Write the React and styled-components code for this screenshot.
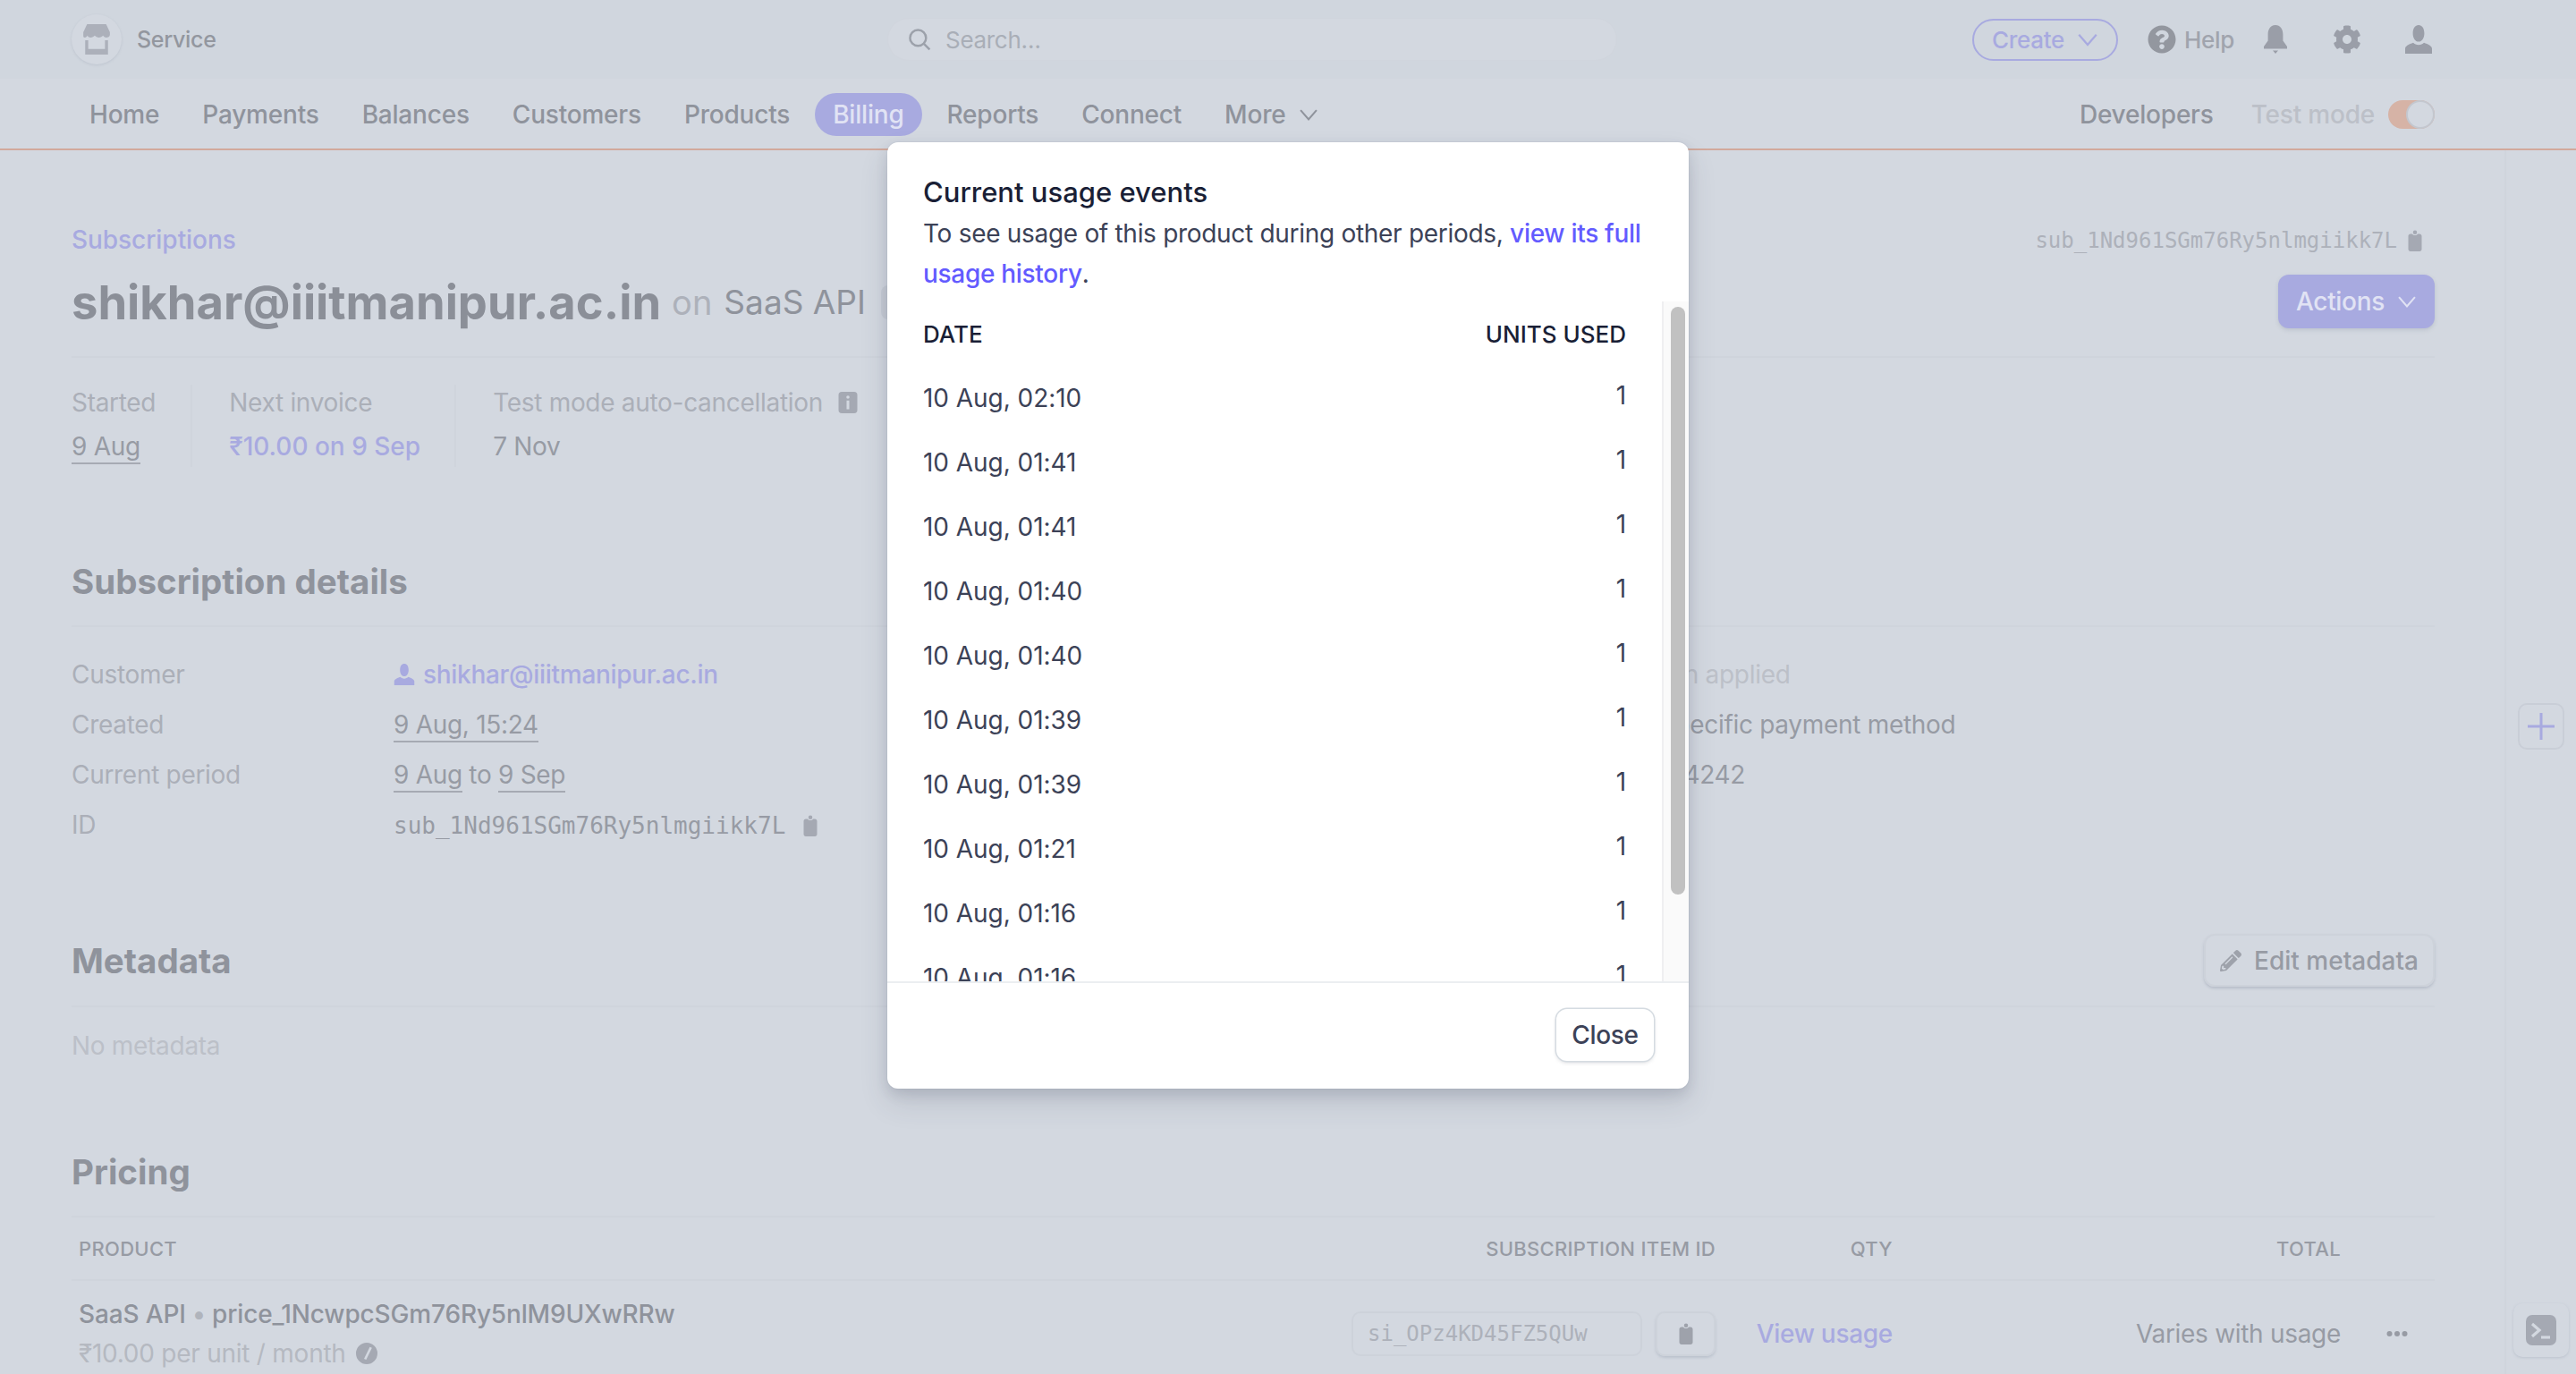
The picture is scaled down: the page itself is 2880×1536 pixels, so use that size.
import styled, { createGlobalStyle } from 'styled-components';
import { FaCog, FaPencilAlt, FaQuestionCircle } from 'react-icons/fa';

const usageEvents = [
  '10 Aug, 02:10',
  '10 Aug, 01:41',
  '10 Aug, 01:41',
  '10 Aug, 01:40',
  '10 Aug, 01:40',
  '10 Aug, 01:39',
  '10 Aug, 01:39',
  '10 Aug, 01:21',
  '10 Aug, 01:16',
  '10 Aug, 01:16',
];

const navLinks = ['Home', 'Payments', 'Balances', 'Customers', 'Products', 'Billing', 'Reports', 'Connect'];

const Chevron = ({ size = 22 }) => (
  <svg width={size} height={size} viewBox="0 0 16 16" fill="none" stroke="currentColor" strokeWidth="1.5">
    <path d="M1.500 4.500 8 12l6.500-7.500" />
  </svg>
);

const Clipboard = ({ size = 24 }) => (
  <svg width={size} height={size} viewBox="0 0 16 16" fill="currentColor">
    <circle cx="8" cy="1.800" r="1.500" />
    <path d="M4.600 3H6c.4.7 1.100 1 2 1s1.600-.3 2-1h1.400c.9 0 1.600.7 1.600 1.600V14.400c0 .9-.7 1.600-1.600 1.600H4.600C3.700 16 3 15.300 3 14.400V4.600C3 3.700 3.700 3 4.600 3z" />
  </svg>
);

const UserIcon = ({ size = 32 }) => (
  <svg width={size} height={size} viewBox="0 0 16 16" fill="currentColor">
    <path d="M8 9.300c1.900 0 3.200-2 3.200-4.700C11.200 1.800 9.900 0 8 0S4.800 1.800 4.800 4.600c0 2.700 1.300 4.700 3.200 4.700z" />
    <path d="M.5 13.200c0-1.400 2.200-2.500 4.500-3.300.7.800 1.800 1.200 3 1.200s2.300-.4 3-1.200c2.300.8 4.500 1.900 4.500 3.300V16H.5z" />
  </svg>
);

const StoreIcon = () => (
  <svg width="34" height="34" viewBox="0 0 16 16" fill="currentColor">
    <path d="M3 0h10l2 4.200v1.300c0 1-1 1.500-1.900 1.500-.8 0-1.400-.4-1.700-1-.4.600-1.300 1-2.200 1-.8 0-1.700-.4-2.200-1-.4.600-1.300 1-2.200 1-.8 0-1.400-.4-1.700-1C3 6.600 2.400 7 1.800 7 1 7 1 6.500 1 5.500V4.200z" />
    <path d="M2 8.500h1.600V13h8.800V8.500H14V16H2z" />
  </svg>
);

const BellIcon = () => (
  <svg width="32" height="32" viewBox="0 0 16 16" fill="currentColor">
    <path d="M8 0c2.600 0 4.200 2.300 4.200 5.200v3.600L14.500 12v1.200h-13V12l2.300-3.200V5.200C3.800 2.300 5.400 0 8 0z" />
    <path d="M6.500 14.300h3L8 16z" />
  </svg>
);

const InfoIcon = () => (
  <svg width="24" height="24" viewBox="0 0 16 16" fill="currentColor">
    <path fillRule="evenodd" d="M3.500 0h9A2.500 2.500 0 0 1 15 2.500v11a2.500 2.500 0 0 1-2.500 2.500h-9A2.500 2.500 0 0 1 1 13.500v-11A2.500 2.500 0 0 1 3.500 0zM7 6.500V13h2V6.500zM8 2.800a1.200 1.200 0 1 0 0 2.400 1.200 1.200 0 0 0 0-2.400z" />
  </svg>
);

const PriceIcon = () => (
  <svg width="24" height="24" viewBox="0 0 16 16" fill="currentColor">
    <path fillRule="evenodd" d="M8 0a8 8 0 1 1 0 16A8 8 0 0 1 8 0zm2.300 3.200L6 12l1.600.7 4.300-8.800z" />
  </svg>
);

const TerminalIcon = () => (
  <svg width="34" height="34" viewBox="0 0 17 17">
    <rect width="17" height="17" rx="3.500" fill="#a5a9b3" />
    <path d="M3.500 5 7.500 8.500 3.500 12" fill="none" stroke="#d3d8e0" strokeWidth="1.600" />
    <path d="M8.500 12.500h5" fill="none" stroke="#d3d8e0" strokeWidth="1.600" />
  </svg>
);

export default function App() {
  return (
    <>
      <GlobalStyle />
      <Page>
        <TopBar>
          <Account>
            <StoreBadge><StoreIcon /></StoreBadge>
            Service
          </Account>
          <SearchBox>
            <svg width="26" height="26" viewBox="0 0 16 16" fill="none" stroke="currentColor" strokeWidth="1.500">
              <circle cx="7" cy="7" r="5.500" />
              <path d="m11 11 4 4" />
            </svg>
            <SearchText>Search…</SearchText>
          </SearchBox>
          <TopActions>
            <CreateButton>Create <Chevron size={24} /></CreateButton>
            <HelpLink><FaQuestionCircle size={32} /> Help</HelpLink>
            <TopIcon $left={30}><BellIcon /></TopIcon>
            <TopIcon $left={48}><FaCog size={32} /></TopIcon>
            <TopIcon $left={48}><UserIcon /></TopIcon>
          </TopActions>
        </TopBar>

        <NavBar>
          <NavLinks>
            {navLinks.map((link) => (
              <NavItem key={link} $active={link === 'Billing'}>{link}</NavItem>
            ))}
            <NavItem>More <Chevron /></NavItem>
          </NavLinks>
          <NavRight>
            <Developers>Developers</Developers>
            <TestLabel>Test mode</TestLabel>
            <Toggle><ToggleThumb /></Toggle>
          </NavRight>
        </NavBar>

        <Body>
          <Content>
            <TopLine>
              <Breadcrumb>Subscriptions</Breadcrumb>
              <IdRow>sub_1Nd961SGm76Ry5nlmgiikk7L <Clipboard /></IdRow>
            </TopLine>

            <TitleRow>
              <TitleText>
                <Email>shikhar@iiitmanipur.ac.in</Email>
                <On>on</On>
                <Product>SaaS API</Product>
                <Badge />
              </TitleText>
              <ActionsButton>Actions <Chevron /></ActionsButton>
            </TitleRow>

            <Stats>
              <Stat>
                <StatLabel>Started</StatLabel>
                <StatValue><Dotted>9 Aug</Dotted></StatValue>
              </Stat>
              <Stat>
                <StatLabel>Next invoice</StatLabel>
                <StatValue $link>₹10.00 on 9 Sep</StatValue>
              </Stat>
              <Stat>
                <StatLabel>Test mode auto-cancellation <InfoIcon /></StatLabel>
                <StatValue>7 Nov</StatValue>
              </Stat>
            </Stats>

            <SectionHead $top={100}>
              <SectionTitle>Subscription details</SectionTitle>
            </SectionHead>
            <Details>
              <DetailColumn>
                <DetailRow>
                  <DetailLabel>Customer</DetailLabel>
                  <CustomerLink><UserIcon size={24} /> shikhar@iiitmanipur.ac.in</CustomerLink>
                </DetailRow>
                <DetailRow>
                  <DetailLabel>Created</DetailLabel>
                  <DetailValue><Dotted>9 Aug, 15:24</Dotted></DetailValue>
                </DetailRow>
                <DetailRow>
                  <DetailLabel>Current period</DetailLabel>
                  <DetailValue><Dotted>9 Aug</Dotted> to <Dotted>9 Sep</Dotted></DetailValue>
                </DetailRow>
                <DetailRow>
                  <DetailLabel>ID</DetailLabel>
                  <MonoValue>sub_1Nd961SGm76Ry5nlmgiikk7L <Clipboard /></MonoValue>
                </DetailRow>
              </DetailColumn>
              <DetailColumn>
                <SideValue $faint>Option applied</SideValue>
                <SideValue>No specific payment method</SideValue>
                <SideValue>•••• 4242</SideValue>
              </DetailColumn>
            </Details>

            <SectionHead $top={94}>
              <SectionTitle>Metadata</SectionTitle>
              <EditButton><FaPencilAlt size={24} /> Edit metadata</EditButton>
            </SectionHead>
            <EmptyNote>No metadata</EmptyNote>

            <SectionHead $top={93}>
              <SectionTitle>Pricing</SectionTitle>
            </SectionHead>
            <PriceHeader>
              <span>Product</span>
              <RightCell>Subscription item ID</RightCell>
              <RightCell>Qty</RightCell>
              <RightCell>Total</RightCell>
            </PriceHeader>
            <PriceRow>
              <div>
                <PriceName>SaaS API <Dot>•</Dot> price_1NcwpcSGm76Ry5nlM9UXwRRw</PriceName>
                <PriceSub>₹10.00 per unit / month <PriceIcon /></PriceSub>
              </div>
              <ItemIdCell>
                <ItemIdField>si_OPz4KD45FZ5QUw</ItemIdField>
                <CopyButton><Clipboard /></CopyButton>
              </ItemIdCell>
              <UsageLink>View usage</UsageLink>
              <RightCell>Varies with usage</RightCell>
              <MoreDots>
                <svg width="24" height="8" viewBox="0 0 24 8" fill="currentColor">
                  <circle cx="3.500" cy="4" r="3" />
                  <circle cx="12" cy="4" r="3" />
                  <circle cx="20.500" cy="4" r="3" />
                </svg>
              </MoreDots>
            </PriceRow>
          </Content>

          <Rail>
            <PlusButton>
              <svg width="32" height="32" viewBox="0 0 32 32" fill="none" stroke="currentColor" strokeWidth="3">
                <path d="M16 1v30M1 16h30" />
              </svg>
            </PlusButton>
            <TerminalButton><TerminalIcon /></TerminalButton>
          </Rail>
        </Body>

        <Overlay>
          <Modal>
            <ModalHead>
              <ModalTitle>Current usage events</ModalTitle>
              <ModalText>
                To see usage of this product during other periods, <ModalLink>view its full usage history</ModalLink>.
              </ModalText>
            </ModalHead>
            <ScrollArea>
              <EventList>
                <EventHeader>
                  <span>DATE</span>
                  <span>UNITS USED</span>
                </EventHeader>
                {usageEvents.map((date, i) => (
                  <EventRow key={i}>
                    <span>{date}</span>
                    <EventUnits>1</EventUnits>
                  </EventRow>
                ))}
              </EventList>
              <ScrollTrack><ScrollThumb /></ScrollTrack>
            </ScrollArea>
            <ModalFooter>
              <CloseButton>Close</CloseButton>
            </ModalFooter>
          </Modal>
        </Overlay>
      </Page>
    </>
  );
}

const GlobalStyle = createGlobalStyle`
  html, body {
    margin: 0;
    padding: 0;
    background: #d3d8e0;
  }
  * {
    box-sizing: border-box;
  }
  body {
    font-family: Inter, "Liberation Sans", sans-serif;
    font-size: 28px;
    letter-spacing: -.3px;
    color: #8f939c;
  }
`;
const Page = styled.div`
  position: relative;
  width: 2880px;
  height: 1536px;
  overflow: hidden;
  background: #d3d8e0;
`;
const TopBar = styled.header`
  height: 88px;
  padding: 0 160px 0 80px;
  display: grid;
  grid-template-columns: 912px 816px 1fr;
  align-items: center;
  background: #d0d6de;
`;
const Account = styled.div`
  display: flex;
  align-items: center;
  gap: 17px;
  font-size: 25px;
  font-weight: 500;
  color: #93979f;
`;
const StoreBadge = styled.div`
  width: 56px;
  height: 56px;
  border-radius: 50%;
  display: flex;
  align-items: center;
  justify-content: center;
  background: #d3d8e0;
  box-shadow: 0 1px 3px rgba(120, 130, 150, .2);
  color: #acb0ba;
`;
const SearchBox = styled.div`
  height: 48px;
  padding: 0 22px;
  display: flex;
  align-items: center;
  gap: 16px;
  border-radius: 24px;
  border: 1px solid #d0d5dd;
  background: #d3d8e0;
  color: #9ca1aa;
`;
const SearchText = styled.span`
  font-size: 26px;
  color: #a9aeb7;
`;
const TopActions = styled.div`
  display: flex;
  align-items: center;
  justify-content: flex-end;
`;
const CreateButton = styled.div`
  width: 163px;
  height: 47px;
  display: flex;
  align-items: center;
  justify-content: center;
  gap: 14px;
  border: 2px solid #a8aae0;
  border-radius: 24px;
  font-size: 26px;
  font-weight: 500;
  color: #a8aae0;
`;
const HelpLink = styled.div`
  margin-left: 33px;
  display: flex;
  align-items: center;
  gap: 9px;
  font-size: 26px;
  font-weight: 500;
  color: #a0a4ad;
  svg {
    color: #93979f;
  }
`;
const TopIcon = styled.div`
  margin-left: ${({ $left }) => $left}px;
  display: flex;
  color: #9a9ea8;
`;
const NavBar = styled.nav`
  height: 80px;
  padding: 2px 158px 0 80px;
  display: flex;
  align-items: center;
  justify-content: space-between;
  border-bottom: 2px solid #d2a99c;
  letter-spacing: -.2px;
`;
const NavLinks = styled.div`
  display: flex;
  gap: 8px;
`;
const NavItem = styled.div`
  height: 48px;
  padding: 0 20px;
  display: flex;
  align-items: center;
  gap: 14px;
  border-radius: 24px;
  font-weight: 500;
  color: ${({ $active }) => ($active ? '#e1e3f4' : '#8f939c')};
  background: ${({ $active }) => ($active ? '#a8aae0' : 'transparent')};
`;
const NavRight = styled.div`
  display: flex;
  align-items: center;
`;
const Developers = styled.span`
  font-weight: 500;
  color: #8f939c;
`;
const TestLabel = styled.span`
  margin-left: 42px;
  font-weight: 500;
  color: #bcc0c8;
`;
const Toggle = styled.div`
  width: 52px;
  height: 32px;
  margin-left: 15px;
  border-radius: 16px;
  background: #d6b3a6;
  display: flex;
  justify-content: flex-end;
`;
const ToggleThumb = styled.div`
  width: 32px;
  height: 32px;
  border-radius: 50%;
  background: #d3d8e0;
  border: 2px solid #c3c7cf;
`;
const Body = styled.div`
  height: 1368px;
  display: flex;
`;
const Content = styled.main`
  flex: 1;
  min-width: 0;
  padding: 80px 78px 0 80px;
`;
const TopLine = styled.div`
  height: 40px;
  display: flex;
  align-items: center;
  justify-content: space-between;
`;
const Breadcrumb = styled.span`
  font-weight: 500;
  letter-spacing: -.05px;
  color: #a8aae0;
`;
const IdRow = styled.span`
  display: flex;
  align-items: center;
  gap: 8px;
  padding: 2px 10px 0 0;
  font-family: "DejaVu Sans Mono", monospace;
  font-size: 24px;
  letter-spacing: 0;
  color: #adb1ba;
  svg {
    color: #a5a9b3;
  }
`;
const TitleRow = styled.div`
  height: 93px;
  margin-top: 19px;
  padding-bottom: 31px;
  display: flex;
  align-items: center;
  justify-content: space-between;
  border-bottom: 2px solid #cfd4dc;
`;
const TitleText = styled.div`
  display: flex;
  align-items: center;
  height: 60px;
  line-height: 60px;
  padding-top: 2px;
`;
const Email = styled.span`
  font-size: 52.500px;
  font-weight: 700;
  letter-spacing: 0;
  color: #8b8f98;
`;
const On = styled.span`
  margin-left: 12px;
  font-size: 38px;
  letter-spacing: 0;
  color: #adb1ba;
`;
const Product = styled.span`
  margin-left: 13px;
  font-size: 37px;
  letter-spacing: 0;
  color: #8f939c;
`;
const Badge = styled.span`
  width: 60px;
  height: 38px;
  margin-left: 17px;
  border-radius: 8px;
  background: #c8cdd6;
`;
const ActionsButton = styled.div`
  width: 175px;
  height: 60px;
  display: flex;
  align-items: center;
  justify-content: center;
  gap: 14px;
  border-radius: 12px;
  background: #a8aae0;
  box-shadow: 0 2px 4px rgba(120, 130, 150, .25);
  font-weight: 500;
  color: #e1e3f4;
`;
const Stats = styled.div`
  margin-top: 30px;
  display: flex;
`;
const Stat = styled.div`
  padding: 0 38px 0 41px;
  border-right: 2px solid #cfd4dc;
  &:first-child {
    padding-left: 0;
    padding-right: 39px;
  }
  &:last-child {
    border-right: 0;
  }
`;
const StatLabel = styled.div`
  height: 40px;
  display: flex;
  align-items: center;
  gap: 16px;
  color: #abafb8;
  svg {
    color: #a5a9b3;
  }
`;
const StatValue = styled.div`
  height: 40px;
  margin-top: 12px;
  letter-spacing: ${({ $link }) => ($link ? '0' : '-.3px')};
  color: ${({ $link }) => ($link ? '#a8aae0' : '#979ba4')};
  font-weight: ${({ $link }) => ($link ? 500 : 400)};
`;
const Dotted = styled.span`
  padding-bottom: 1px;
  border-bottom: 2px solid #a6aab3;
`;
const SectionHead = styled.div`
  margin-top: ${({ $top }) => $top}px;
  padding-bottom: 21px;
  min-height: 78px;
  display: flex;
  align-items: center;
  justify-content: space-between;
  border-bottom: 2px solid #cfd4dc;
`;
const SectionTitle = styled.h2`
  margin: 0;
  line-height: 56px;
  font-size: 38.500px;
  font-weight: 700;
  letter-spacing: 0;
  color: #8f939c;
`;
const Details = styled.div`
  padding-top: 25px;
  display: grid;
  grid-template-columns: 1733px 1fr;
`;
const DetailColumn = styled.div`
  display: flex;
  flex-direction: column;
`;
const DetailRow = styled.div`
  height: 56px;
  display: grid;
  grid-template-columns: 360px 1fr;
  align-items: center;
`;
const DetailLabel = styled.span`
  color: #abafb8;
`;
const DetailValue = styled.span`
  color: #979ba4;
`;
const CustomerLink = styled.span`
  display: flex;
  align-items: center;
  gap: 9px;
  font-weight: 500;
  color: #a8aae0;
`;
const MonoValue = styled.span`
  display: flex;
  align-items: center;
  gap: 16px;
  padding-top: 2px;
  font-family: "DejaVu Sans Mono", monospace;
  font-size: 26px;
  letter-spacing: 0;
  color: #979ba4;
  svg {
    color: #a5a9b3;
  }
`;
const SideValue = styled.span`
  height: 56px;
  line-height: 56px;
  white-space: nowrap;
  color: ${({ $faint }) => ($faint ? '#bcc0c8' : '#979ba4')};
`;
const EditButton = styled.div`
  height: 59px;
  padding: 0 16px;
  display: flex;
  align-items: center;
  gap: 14px;
  border: 2px solid #cdd2da;
  border-radius: 12px;
  box-shadow: 0 2px 3px rgba(120, 130, 150, .3);
  font-weight: 500;
  letter-spacing: 0;
  color: #979ba4;
  svg {
    color: #9ea2ab;
  }
`;
const EmptyNote = styled.div`
  margin-top: 23px;
  line-height: 40px;
  color: #bcc0c8;
`;
const priceColumns = '1423px 407px 198px 501px 1fr';
const PriceHeader = styled.div`
  height: 71px;
  padding-left: 8px;
  display: grid;
  grid-template-columns: ${priceColumns};
  align-items: center;
  border-bottom: 2px solid #cfd4dc;
  font-size: 22px;
  font-weight: 500;
  text-transform: uppercase;
  letter-spacing: .3px;
  color: #979ba4;
`;
const RightCell = styled.span`
  text-align: right;
  color: inherit;
`;
const PriceRow = styled.div`
  padding: 17px 0 0 8px;
  display: grid;
  grid-template-columns: ${priceColumns};
  align-items: center;
  color: #979ba4;
`;
const PriceName = styled.div`
  line-height: 40px;
  font-weight: 500;
  letter-spacing: -.15px;
  color: #8f939c;
`;
const Dot = styled.span`
  color: #b0b4bc;
`;
const PriceSub = styled.div`
  margin-top: 4px;
  line-height: 40px;
  display: flex;
  align-items: center;
  gap: 11px;
  letter-spacing: -.25px;
  color: #b5b9c1;
  svg {
    color: #a5a9b3;
  }
`;
const ItemIdCell = styled.div`
  display: flex;
  gap: 15px;
`;
const ItemIdField = styled.div`
  width: 325px;
  height: 50px;
  padding-left: 16px;
  display: flex;
  align-items: center;
  border: 2px solid #cdd2da;
  border-radius: 10px;
  font-family: "DejaVu Sans Mono", monospace;
  font-size: 24px;
  letter-spacing: 0;
  color: #adb1ba;
`;
const CopyButton = styled.div`
  width: 67px;
  height: 50px;
  display: flex;
  align-items: center;
  justify-content: center;
  border: 2px solid #cdd2da;
  border-radius: 10px;
  box-shadow: 0 2px 3px rgba(120, 130, 150, .25);
  color: #9ea2ab;
`;
const UsageLink = styled.span`
  text-align: right;
  font-weight: 500;
  color: #a8aae0;
`;
const MoreDots = styled.span`
  padding-left: 51px;
  display: flex;
  color: #979ba4;
`;
const Rail = styled.aside`
  width: 80px;
  display: flex;
  flex-direction: column;
  align-items: center;
  border-left: 2px solid #cfd4dc;
  padding-top: 618px;
`;
const PlusButton = styled.div`
  width: 52px;
  height: 52px;
  display: flex;
  align-items: center;
  justify-content: center;
  border: 2px solid #c9ced7;
  border-radius: 10px;
  color: #a8aae0;
`;
const TerminalButton = styled.div`
  width: 62px;
  height: 60px;
  margin-top: 619px;
  display: flex;
  align-items: center;
  justify-content: center;
  border-radius: 10px;
  box-shadow: 0 1px 3px rgba(120, 130, 150, .25);
`;
const Overlay = styled.div`
  position: absolute;
  inset: 0;
  padding-top: 159px;
  display: flex;
  justify-content: center;
  align-items: flex-start;
`;
const Modal = styled.section`
  width: 896px;
  height: 1058px;
  display: flex;
  flex-direction: column;
  border-radius: 12px;
  background: #fff;
  box-shadow: 0 0 0 1px rgba(120, 130, 150, .08), 0 16px 32px rgba(60, 66, 87, .14), 0 6px 14px rgba(60, 66, 87, .14);
`;
const ModalHead = styled.div`
  height: 178px;
  padding: 33px 40px 0;
`;
const ModalTitle = styled.h3`
  margin: 0 0 2px;
  line-height: 45px;
  font-size: 31px;
  font-weight: 500;
  letter-spacing: 0;
  color: #1a1f36;
`;
const ModalText = styled.p`
  margin: 0;
  line-height: 45px;
  color: #3c4257;
`;
const ModalLink = styled.span`
  font-weight: 500;
  color: #635bff;
`;
const ScrollArea = styled.div`
  flex: 1;
  min-height: 0;
  display: flex;
  overflow: hidden;
`;
const EventList = styled.div`
  flex: 1;
  min-width: 0;
  padding: 0 40px;
  overflow: hidden;
`;
const EventHeader = styled.div`
  height: 72px;
  display: flex;
  align-items: center;
  justify-content: space-between;
  font-size: 26px;
  font-weight: 500;
  letter-spacing: 0;
  color: #1a1f36;
`;
const EventRow = styled.div`
  height: 72px;
  display: flex;
  align-items: center;
  justify-content: space-between;
  letter-spacing: -.05px;
  color: #3c4257;
`;
const EventUnits = styled.span`
  margin-bottom: 6px;
`;
const ScrollTrack = styled.div`
  width: 30px;
  padding: 6px 6px 0 8px;
  border-left: 2px solid #efeff1;
  background: #fafafa;
`;
const ScrollThumb = styled.div`
  width: 16px;
  height: 657px;
  border-radius: 8px;
  background: #c1c1c1;
`;
const ModalFooter = styled.div`
  height: 120px;
  padding: 29px 39px 0 0;
  display: flex;
  justify-content: flex-end;
  align-items: flex-start;
  border-top: 2px solid #ebeef1;
`;
const CloseButton = styled.div`
  width: 109px;
  height: 58px;
  display: flex;
  align-items: center;
  justify-content: center;
  border-radius: 12px;
  background: #fff;
  box-shadow: 0 0 0 1.500px #d5dbe1, 0 2px 4px rgba(60, 66, 87, .2);
  font-weight: 500;
  color: #3c4257;
`;
